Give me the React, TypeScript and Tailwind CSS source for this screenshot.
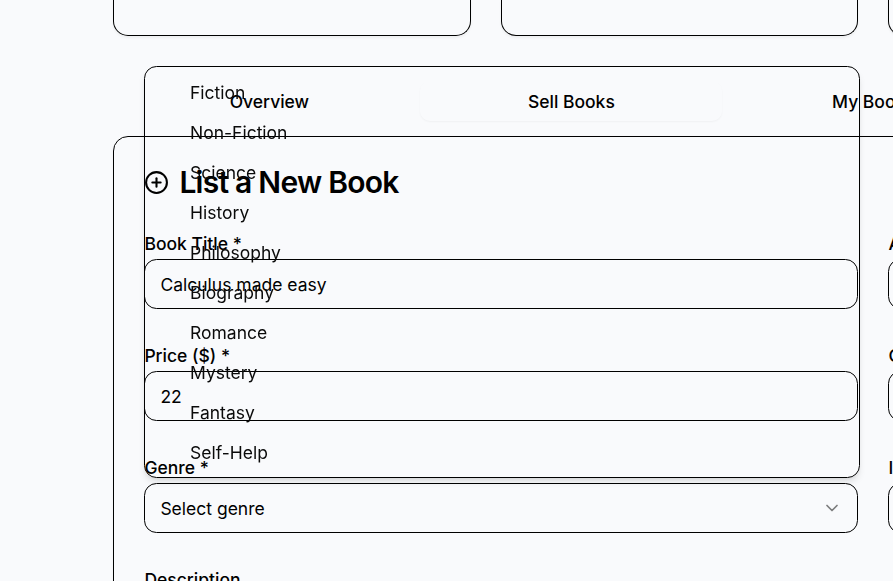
import { ChevronDown, CirclePlus } from "lucide-react";

const tabs = ["Overview", "Sell Books", "My Books", "Orders", "Wishlist"];

const genres = [
  "Fiction",
  "Non-Fiction",
  "Science",
  "History",
  "Philosophy",
  "Biography",
  "Romance",
  "Mystery",
  "Fantasy",
  "Self-Help",
];

const cardShadow = "shadow-[0_1.25px_2.5px_0_rgba(0,0,0,0.05)]";
const activeTabShadow = "shadow-[0_1px_2px_0_rgba(0,0,0,0.04)]";

function Field({ label, value, select }: { label: string; value?: string; select?: boolean }) {
  return (
    <div>
      <div className="flex h-8 items-center whitespace-nowrap pt-0.5 font-medium leading-[17.5px]">{label}</div>
      <div className="flex h-[50px] items-center justify-between rounded-[12.5px] border border-black px-[15px]">
        <span>{value}</span>
        {select && <ChevronDown className="size-5 opacity-50" />}
      </div>
    </div>
  );
}

export default function App() {
  return (
    <div className="relative h-[581px] w-full overflow-hidden bg-[#f9fafc] font-['Inter',sans-serif] text-[17.5px] leading-[25px] text-black">
      <div className="ml-[113.4px] w-[1520px]">
        <div className="grid grid-cols-4 gap-[30px]">
          {[0, 1, 2, 3].map((n) => (
            <div key={n} className={`h-9 rounded-b-[15px] border border-t-0 border-black ${cardShadow}`} />
          ))}
        </div>

        <div className="mt-10 grid h-[50px] grid-cols-5 items-center p-[5px] font-medium">
          {tabs.map((tab) => (
            <div
              key={tab}
              className={`flex h-10 items-center justify-center rounded-[10px] ${tab === "Sell Books" ? activeTabShadow : ""}`}
            >
              {tab}
            </div>
          ))}
        </div>

        <div className={`mt-2.5 h-[700px] rounded-[15px] border border-black px-[30px] pt-[30px] ${cardShadow}`}>
          <div className="flex h-[30px] items-center gap-2.5">
            <CirclePlus className="size-[25px]" />
            <h2 className="text-[30px] font-semibold leading-[30px] tracking-[-0.75px]">List a New Book</h2>
          </div>
          <div className="mt-[30px] grid grid-cols-2 gap-[30px]">
            <Field label="Book Title *" value="Calculus made easy" />
            <Field label="Author *" />
            <Field label="Price ($) *" value="22" />
            <Field label="Condition *" />
            <Field label="Genre *" value="Select genre" select />
            <Field label="ISBN" />
            <Field label="Description" />
          </div>
        </div>
      </div>

      <div className="absolute left-[144px] top-[66px] w-[716px] rounded-[12.5px] border border-black p-[5px] text-[#0a0a0a] shadow-[0_5px_7.5px_-1.25px_rgba(0,0,0,0.1),0_2.5px_5px_-2.5px_rgba(0,0,0,0.1)] will-change-transform">
        {genres.map((genre) => (
          <div key={genre} className="flex h-10 items-center pl-10">
            {genre}
          </div>
        ))}
      </div>
    </div>
  );
}
